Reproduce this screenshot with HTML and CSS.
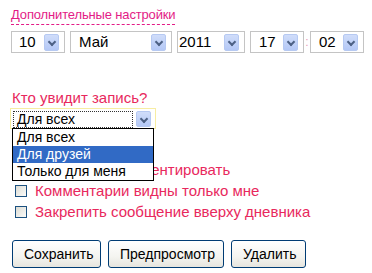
FILE: index.html
```html
<!DOCTYPE html>
<html lang="ru">
<head>
    <meta charset="UTF-8">
    <title>Настройки записи</title>
    <link rel="stylesheet" href="styles.css">
</head>
<body>
    <div class="form">
        <div class="extra">
            <span class="extra-link">Дополнительные настройки</span>
        </div>

        <!-- Date and time -->
        <div class="date-row">
            <div class="select w-day"><span class="value">10</span><span class="arrow"></span></div>
            <div class="select w-month"><span class="value">Май</span><span class="arrow"></span></div>
            <div class="select w-year"><span class="value">2011</span><span class="arrow"></span></div>
            <div class="select w-hour"><span class="value">17</span><span class="arrow"></span></div>
            <span class="colon">:</span>
            <div class="select w-min"><span class="value">02</span><span class="arrow"></span></div>
        </div>

        <!-- Access -->
        <div class="access">
            <div class="access-title">Кто увидит запись?</div>
            <div class="access-select">
                <div class="select focused">
                    <span class="value"><span class="focus-ring">Для всех</span></span>
                    <span class="arrow"></span>
                </div>
                <ul class="dropdown">
                    <li>Для всех</li>
                    <li class="active">Для друзей</li>
                    <li>Только для меня</li>
                </ul>
            </div>
        </div>

        <div class="options">
            <label class="option"><span class="checkbox"></span>Разрешить комментировать</label>
            <label class="option"><span class="checkbox"></span>Комментарии видны только мне</label>
            <label class="option"><span class="checkbox"></span>Закрепить сообщение вверху дневника</label>
        </div>

        <div class="buttons">
            <button class="btn">Сохранить</button>
            <button class="btn">Предпросмотр</button>
            <button class="btn">Удалить</button>
        </div>
    </div>
</body>
</html>
```

FILE: styles.css
```css
* {
    margin: 0;
    padding: 0;
    box-sizing: border-box;
}

body {
    background: #fff;
    font-family: 'Liberation Sans', Arial, sans-serif;
    color: #000;
}

.form {
    padding: 5px 0 0 11px;
    width: 372px;
}

/* Extra settings link */
.extra {
    height: 26px;
}

.extra-link {
    display: inline-block;
    font-size: 13px;
    letter-spacing: -0.15px;
    line-height: 16px;
    color: #e31b86;
    border-bottom: 1px dashed #e31b86;
    padding-bottom: 1px;
}

/* Selects */
.date-row {
    display: flex;
    align-items: center;
}

.select {
    display: flex;
    align-items: center;
    height: 22px;
    border: 1px solid #c4c4c4;
    background: #fff;
    padding: 0 5px 0 7px;
    font-size: 15px;
}

.select .value {
    flex: 1;
    line-height: 18px;
}

.arrow {
    width: 15px;
    height: 17px;
    border: 1px solid #b6c9f2;
    border-radius: 2px;
    background: linear-gradient(#d0ddfa, #b4c8f6);
    position: relative;
}

.arrow::after {
    content: "";
    position: absolute;
    left: 4px;
    top: 4px;
    width: 4px;
    height: 4px;
    border-right: 2px solid #4d6185;
    border-bottom: 2px solid #4d6185;
    transform: rotate(45deg);
}

.w-day { width: 54px; margin-right: 5px; }
.w-month { width: 102px; margin-right: 5px; padding-left: 8px; }
.w-year { width: 68px; margin-right: 5px; padding-left: 1px; }
.w-hour { width: 54px; padding-left: 8px; }
.w-min { width: 54px; padding-left: 8px; }

.colon {
    width: 6px;
    text-align: center;
    color: #e7a0b8;
    font-size: 12px;
}

/* Access */
.access {
    margin-top: 36px;
}

.access-title {
    font-size: 15px;
    line-height: 18px;
    color: #e8285d;
    margin-left: 1px;
}

.access-select {
    position: relative;
    margin: 1px 0 0 -1px;
    width: 146px;
}

.select.focused {
    height: 21px;
    border: 1px solid #f7eda2;
    padding: 0 4px 0 2px;
    font-size: 14px;
}

.focus-ring {
    display: inline-block;
    width: 120px;
    padding: 0 3px;
    border: 1px dotted #333;
    line-height: 15px;
}

.select.focused .arrow {
    height: 16px;
}

.dropdown {
    position: absolute;
    top: 20px;
    left: 2px;
    width: 142px;
    list-style: none;
    background: #fff;
    border: 1px solid #000;
    font-size: 14px;
    z-index: 10;
}

.dropdown li {
    height: 17px;
    line-height: 17px;
    padding-left: 4px;
}

.dropdown li.active {
    background: #316ac5;
    color: #fff;
}

/* Checkboxes */
.options {
    margin-top: 30px;
}

.option {
    display: flex;
    align-items: center;
    height: 21px;
    font-size: 15px;
    color: #e8285d;
    margin-left: 4px;
}

.checkbox {
    width: 12px;
    height: 12px;
    border: 1px solid #1c5180;
    background: linear-gradient(135deg, #dcdcd4, #fbfbf9);
    margin-right: 8px;
}

/* Buttons */
.buttons {
    display: flex;
    gap: 7px;
    margin-top: 18px;
    margin-left: 1px;
}

.btn {
    height: 28px;
    padding: 0 11px;
    font-family: 'Liberation Sans', Arial, sans-serif;
    font-size: 14px;
    color: #000;
    border: 1px solid #003c74;
    border-radius: 3px;
    background: linear-gradient(#fff, #f4f4f0 60%, #e6e5de);
}

.btn:nth-child(1) { width: 89px; }
.btn:nth-child(2) { width: 116px; }
.btn:nth-child(3) { width: 75px; }
```
